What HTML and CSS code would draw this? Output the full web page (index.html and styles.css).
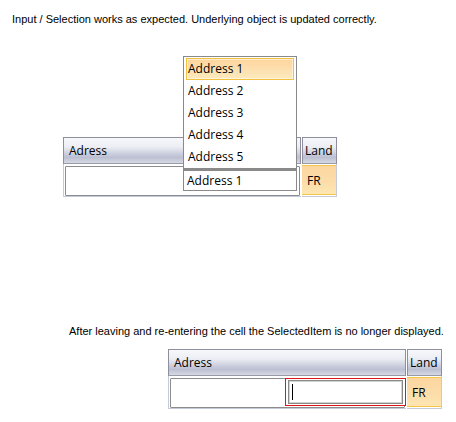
FILE: index.html
```html
<!DOCTYPE html>
<html>
<head>
<meta charset="utf-8">
<link rel="stylesheet" href="styles.css">
</head>
<body>
<p class="note note-top">Input / Selection works as expected. Underlying object is updated correctly.</p>
<div class="grid grid-top">
  <div class="head head-addr">Adress</div>
  <div class="head head-land">Land</div>
  <div class="cell cell-addr"><div class="addr-box"></div></div>
  <div class="cell cell-land"><div class="land-fill">FR</div></div>
  <ul class="dropdown">
    <li class="item item-selected">Address 1</li>
    <li class="item">Address 2</li>
    <li class="item">Address 3</li>
    <li class="item">Address 4</li>
    <li class="item">Address 5</li>
  </ul>
  <div class="combo-text">Address 1</div>
</div>
<p class="note note-bottom">After leaving and re-entering the cell the SelectedItem is no longer displayed.</p>
<div class="grid grid-bottom">
  <div class="head head-addr">Adress</div>
  <div class="head head-land">Land</div>
  <div class="cell cell-addr">
    <div class="addr-box"></div>
    <div class="editor"><div class="editor-box"><span class="caret"></span></div></div>
  </div>
  <div class="cell cell-land"><div class="land-fill">FR</div></div>
</div>
</body>
</html>
```
FILE: styles.css
```css
html, body {
  margin: 0;
  padding: 0;
  background: #ffffff;
}
body {
  width: 456px;
  height: 422px;
  overflow: hidden;
  font-family: "Liberation Sans", Arial, sans-serif;
  font-size: 11px;
  color: #000;
}
.note {
  margin: 0;
  line-height: 13px;
  white-space: nowrap;
}
.note-top {
  padding: 13px 0 0 12px;
}
.grid {
  position: relative;
  display: grid;
  grid-template-columns: 238px 35px;
  grid-template-rows: 27px 33px;
  column-gap: 1px;
  width: 274px;
  font-family: "Open Sans", "Segoe UI", sans-serif;
  font-size: 12px;
}
.grid-top {
  margin: 111px 0 0 63px;
}
.note-bottom {
  margin-top: 128px;
  padding-left: 69px;
}
.grid-bottom {
  margin: 11px 0 0 168px;
}
.head {
  box-sizing: border-box;
  border: 1px solid #8e8e9c;
  border-bottom-color: #9a9aa8;
  background: linear-gradient(to bottom, #f7f8fb 0%, #eceef4 35%, #c9ccdc 65%, #bcc0d2 78%, #d6d8e3 100%);
  display: flex;
  align-items: center;
  padding-top: 1px;
  line-height: 16px;
  color: #000;
}
.head-addr {
  padding-left: 5px;
}
.head-land {
  padding-left: 2px;
}
.cell {
  box-sizing: border-box;
  border-bottom: 1px solid #c6c9d8;
}
.cell-addr {
  position: relative;
  border-left: 1px solid #c6c9d8;
  padding: 2px 1px 0 1px;
}
.addr-box {
  box-sizing: border-box;
  height: 30px;
  border: 1px solid #8c8c8c;
  border-radius: 1px;
  background: #fff;
}
.cell-land {
  border-right: 1px solid #c6c9d8;
  padding-top: 1px;
}
.land-fill {
  box-sizing: border-box;
  height: 30px;
  border-top: 1px solid #f4c64a;
  border-bottom: 1px solid #f4c64a;
  background: linear-gradient(to bottom, #fcd6a0 0%, #fcdca8 50%, #fde6b2 100%);
  padding-left: 5px;
  display: flex;
  align-items: center;
  color: #000;
}
.dropdown {
  position: absolute;
  left: 120px;
  top: -81px;
  width: 114px;
  box-sizing: border-box;
  margin: 0;
  padding: 1px 2px 0 2px;
  list-style: none;
  background: #fff;
  border: 1px solid #8a8a8a;
  border-bottom: 2px solid #8a8a8a;
  z-index: 2;
}
.item {
  box-sizing: border-box;
  height: 22px;
  line-height: 20px;
  padding-left: 1px;
  border: 1px solid transparent;
  color: #000;
}
.item-selected {
  border-color: #f2c23e;
  background: linear-gradient(to bottom, #fdd59e 0%, #fddfae 50%, #fdeabd 100%);
  box-shadow: inset 0 0 0 1px rgba(255, 255, 255, 0.5);
}
.combo-text {
  position: absolute;
  left: 120px;
  top: 33px;
  width: 114px;
  height: 21px;
  box-sizing: border-box;
  border: 1px solid #8a8a8a;
  background: #fff;
  padding-left: 3px;
  line-height: 19px;
  color: #000;
  z-index: 2;
}
.editor {
  position: absolute;
  right: 0;
  top: 2px;
  width: 121px;
  height: 28px;
  box-sizing: border-box;
  border: 1px solid #e01414;
  background: #fff;
  padding: 1px 2px;
}
.editor-box {
  box-sizing: border-box;
  height: 24px;
  border: 1px solid #888;
  box-shadow: inset 0 0 0 1px #d4d4d4;
  padding: 3px 0 0 3px;
}
.caret {
  display: block;
  width: 1px;
  height: 16px;
  background: #000;
}
```
